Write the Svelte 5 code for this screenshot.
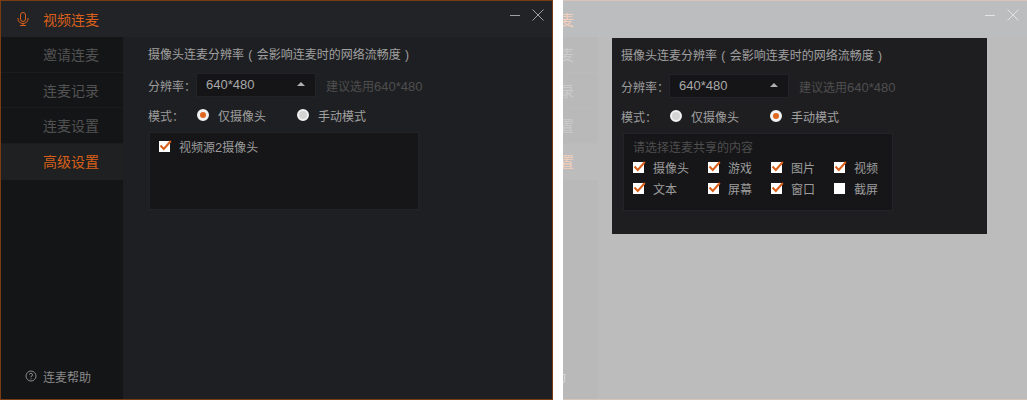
<script>
  const navItems = ['邀请连麦', '连麦记录', '连麦设置', '高级设置'];
  const shareItems = [
    { label: '摄像头', on: true },
    { label: '游戏', on: true },
    { label: '图片', on: true },
    { label: '视频', on: true },
    { label: '文本', on: true },
    { label: '屏幕', on: true },
    { label: '窗口', on: true },
    { label: '截屏', on: false },
  ];
</script>

{#snippet checkbox(on)}
  <span class="check">
    {#if on}
      <svg viewBox="0 0 13 12" width="13" height="12">
        <path d="M1.5 5.5 L4.8 9 L11.8 1" fill="none" stroke="#d9601a" stroke-width="2" />
      </svg>
    {/if}
  </span>
{/snippet}

{#snippet settings(manual)}
  <div class="heading">摄像头连麦分辨率 ( 会影响连麦时的网络流畅度 )</div>
  <div class="row res-row">
    <span class="label">分辨率：</span>
    <div class="select">
      <span class="num">640*480</span>
      <i class="caret"></i>
    </div>
    <span class="hint">建议选用<span class="num">640*480</span></span>
  </div>
  <div class="row mode-row">
    <span class="label mode-label">模式：</span>
    <span class="radio-item first">
      <i class="radio" class:selected={!manual}></i>仅摄像头
    </span>
    <span class="radio-item">
      <i class="radio" class:selected={manual}></i>手动模式
    </span>
  </div>
  <div class="box" class:manual>
    {#if manual}
      <div class="box-title">请选择连麦共享的内容</div>
      <div class="share-grid">
        {#each shareItems as item}
          <label class="share-item">{@render checkbox(item.on)}{item.label}</label>
        {/each}
      </div>
    {:else}
      <label class="source">{@render checkbox(true)}<span>视频源<span class="num">2</span>摄像头</span></label>
    {/if}
  </div>
{/snippet}

{#snippet win(showSettings)}
  <div class="window">
    <header class="titlebar">
      <svg class="mic" viewBox="0 0 12 14" width="12" height="14" fill="none" stroke="#d9601a" stroke-width="1">
        <rect x="3.5" y="0.5" width="5" height="9" rx="2.5" />
        <path d="M1 6 V7 A5 4.5 0 0 0 11 7 V6 M6 11.5 V13.5 M3 13.5 H9" />
      </svg>
      <span class="win-title">视频连麦</span>
      <div class="controls">
        <i class="min"></i>
        <svg viewBox="0 0 12 12" width="12" height="12" stroke="#a0a0a0" stroke-width="1">
          <path d="M0.5 0.5 L11.5 11.5 M11.5 0.5 L0.5 11.5" />
        </svg>
      </div>
    </header>
    <div class="body">
      <nav class="sidebar">
        {#each navItems as item, i}
          <div class="nav-item" class:active={i === 3}>{item}</div>
        {/each}
        <div class="help">
          <svg viewBox="0 0 12 12" width="12" height="12" fill="none" stroke="#8a8a8a">
            <circle cx="6" cy="6" r="5" />
            <path d="M4.5 4.7 A1.5 1.5 0 1 1 6 6.3 V7.3 M6 8.3 V9.3" />
          </svg>
          连麦帮助
        </div>
      </nav>
      <main class="content">
        {#if showSettings}{@render settings(false)}{/if}
      </main>
    </div>
  </div>
{/snippet}

<div class="page">
  <section class="pane left">{@render win(true)}</section>
  <section class="pane right">
    <div class="shifted">{@render win(false)}</div>
    <div class="veil"></div>
    <div class="dialog">{@render settings(true)}</div>
  </section>
</div>

<style>
  :global(body) {
    margin: 0;
    background: #fff;
  }

  .page {
    display: flex;
    justify-content: space-between;
    width: 1027px;
    height: 400px;
    overflow: hidden;
    font-family: "Liberation Sans", "Noto Sans CJK SC", sans-serif;
    font-size: 12px;
    color: #9c9c9c;
  }

  .num { font-size: 13px; }

  .pane {
    position: relative;
    height: 400px;
    overflow: hidden;
  }

  .left { width: 553px; }
  .right { width: 464px; }

  .shifted {
    width: 553px;
    margin-left: -88px;
  }

  .veil {
    position: absolute;
    inset: 0;
    background: rgba(255, 255, 255, 0.7);
  }

  .dialog {
    position: absolute;
    left: 49px;
    top: 38px;
    width: 366px;
    height: 196px;
    padding-left: 9px;
    background: #1e1e21;
  }

  .window {
    box-sizing: border-box;
    display: flex;
    flex-direction: column;
    width: 553px;
    height: 400px;
    border: 1px solid #7a3a12;
    background: #1e1f22;
  }

  .titlebar {
    display: flex;
    align-items: center;
    flex: none;
    height: 36px;
    padding-left: 16px;
    background: #212327;
  }

  .mic { margin-right: 14px; }

  .win-title {
    font-size: 14px;
    color: #d9601a;
  }

  .controls {
    display: flex;
    align-items: center;
    gap: 12px;
    margin: -8px 8px 0 auto;
  }

  .min {
    width: 10px;
    height: 1px;
    background: #a0a0a0;
  }

  .body {
    display: flex;
    flex: 1;
    min-height: 0;
  }

  .sidebar {
    display: flex;
    flex-direction: column;
    flex: none;
    width: 122px;
    background: #141517;
  }

  .nav-item {
    box-sizing: border-box;
    height: 35.7px;
    padding-left: 42px;
    line-height: 37px;
    font-size: 14px;
    color: #525252;
    border-bottom: 1px solid #1b1c1e;
  }

  .nav-item.active {
    color: #d9601a;
    background: #1e2022;
    border-bottom: 0;
  }

  .help {
    display: flex;
    align-items: center;
    gap: 6px;
    margin-top: auto;
    padding: 0 0 14px 24px;
    height: 18px;
    color: #8a8a8a;
  }

  .content {
    flex: 1;
    padding-left: 25px;
  }

  .heading {
    height: 18px;
    padding-top: 9px;
    line-height: 18px;
    word-spacing: 1px;
    color: #a0a0a0;
  }

  .row {
    display: flex;
    align-items: center;
  }

  .res-row {
    margin-top: 9px;
    height: 24px;
  }

  .label {
    width: 48px;
    flex: none;
    white-space: nowrap;
  }

  .select {
    box-sizing: border-box;
    display: flex;
    align-items: center;
    justify-content: space-between;
    width: 120px;
    height: 24px;
    padding: 0 10px 2px 9px;
    background: #151517;
    border: 1px solid #222327;
    color: #a8a8a8;
  }

  .caret {
    width: 0;
    height: 0;
    border: 4px solid transparent;
    border-top: 0;
    border-bottom: 4px solid #b0b0b0;
  }

  .hint {
    margin-left: 10px;
    color: #4e4e4e;
  }

  .mode-row {
    margin-top: 6px;
    height: 24px;
  }

  .mode-label { width: 49px; }

  .radio-item {
    display: flex;
    align-items: center;
    gap: 9px;
    color: #a0a0a0;
  }

  .radio-item.first { width: 100px; }

  .radio {
    box-sizing: border-box;
    width: 12px;
    height: 12px;
    border-radius: 50%;
    background: #d4d4d4;
    border: 2px solid #f2f2f2;
  }

  .radio.selected {
    background: #e0651e;
    border: 3px solid #f2f2f2;
  }

  .box {
    box-sizing: border-box;
    width: 270px;
    height: 78px;
    margin: 5px 0 0 1px;
    padding: 5px 9px;
    background: #161618;
    border: 1px solid #222327;
  }

  .box.manual { margin-left: 2px; }

  .source {
    display: flex;
    align-items: center;
    gap: 9px;
    height: 16px;
    margin-top: -1px;
    padding-top: 1px;
  }

  .box-title {
    line-height: 18px;
    color: #4e4e4e;
  }

  .share-grid {
    display: grid;
    grid-template-columns: 75px 63px 63px 63px;
    grid-auto-rows: 21px;
  }

  .share-item {
    display: flex;
    align-items: center;
    gap: 9px;
  }

  .check {
    position: relative;
    display: inline-block;
    flex: none;
    width: 11px;
    height: 11px;
    background: #fff;
  }

  .check svg {
    position: absolute;
    left: 0;
    top: -1px;
  }
</style>
